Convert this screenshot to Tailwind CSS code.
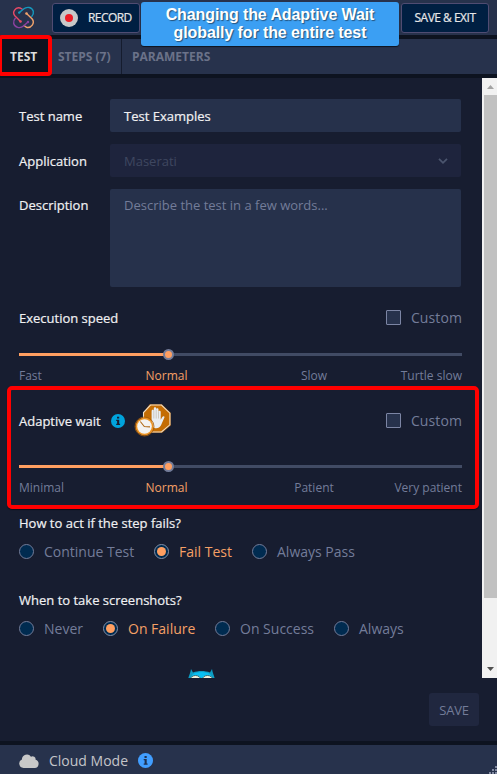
<!DOCTYPE html>
<html lang="en">
<head>
<meta charset="utf-8">
<title>Test settings</title>
<script src="https://cdn.jsdelivr.net/npm/@tailwindcss/browser@4"></script>
</head>
<body class="relative flex h-[774px] w-[497px] flex-col overflow-hidden bg-[#171d30] font-['Open_Sans',sans-serif] text-[13px] whitespace-nowrap">
  <header class="flex h-[39px] shrink-0 items-start border-b-4 border-[#0d1320] bg-[#27324c]">
    <svg class="mt-[6px] ml-3 size-[23px] shrink-0" viewBox="0 0 23 23" fill="none" stroke-width="1.4" stroke-linecap="round">
      <path d="M8.500 15.500 2.800 9.800C-.2 6 3.500 .8 8 2L10.800 3.500" stroke="#e84a67"/>
      <path d="M7.200 6.600 11.500 3C15 .2 20 1 21.300 5.200 21.800 7.500 21 9 19.800 10.400" stroke="#1599be"/>
      <path d="M14.500 7.500 20 12.800C23.500 17 19 22.500 14.500 21.300L12 19.500" stroke="#f0a26b"/>
      <path d="M16 16 11.500 20C8 23 2.800 21.500 1.700 17.500 1.300 15.200 2 13.700 3.300 12.300" stroke="#8b42a0"/>
      <g stroke="none"><circle cx="8.500" cy="15.500" r="1.300" fill="#e84a67"/><circle cx="7.200" cy="6.600" r="1.200" fill="#1599be"/><circle cx="14.500" cy="7.500" r="1.300" fill="#f0a26b"/><circle cx="16" cy="16" r="1.200" fill="#8b42a0"/></g>
    </svg>
    <button class="mt-[3px] ml-[17px] flex h-[30px] w-[88px] shrink-0 items-center rounded-[3px] border border-[#504c72] bg-[#001f42] pl-[7px] text-[12px] font-medium text-[#e6e6e8]">
      <span class="mr-[10px] flex size-[18px] shrink-0 items-center justify-center rounded-full bg-[#c8c8c8]"><span class="size-2 rounded-full bg-[#ee1c25]"></span></span><span class="tracking-[-0.55px] [-webkit-text-stroke:0.2px]">RECORD</span>
    </button>
    <button class="mt-[3px] ml-auto mr-[8px] h-[30px] w-[88px] rounded-[3px] border border-[#504c72] bg-[#001f42] text-[12px] font-medium tracking-[-0.5px] text-[#e6e6e8] [-webkit-text-stroke:0.2px]">SAVE &amp; EXIT</button>
  </header>
  <nav class="flex h-[39px] shrink-0 items-stretch border-b-4 border-[#0d1320] bg-[#27324c] text-[12px] leading-[35px] font-bold text-[#6b7289]">
    <div class="w-[48px] bg-[#0d1320] pl-[10px] text-[#dddddd]">TEST</div>
    <div class="w-[74px] border-r border-[#151c2e] pl-[10px]">STEPS (7)</div>
    <div class="pl-[10px]">PARAMETERS</div>
  </nav>
  <div class="flex h-[600px] shrink-0">
    <main class="h-[600px] w-[482px] overflow-hidden pt-[21px] pr-5 pl-[19px] font-medium text-[#f0f0f2]">
      <div class="flex h-[33px] items-center"><div class="w-[91px] pt-[2px] [-webkit-text-stroke:0.2px]">Test name</div><div class="flex h-full w-[351px] items-center rounded-[2px] bg-[#26314b] pt-[2px] pl-[14px] [-webkit-text-stroke:0.2px]"><span>Test Examples</span></div></div>
      <div class="mt-3 flex h-[33px] items-center"><div class="w-[91px] pt-[2px] [-webkit-text-stroke:0.2px]">Application</div><div class="flex h-full w-[351px] items-center justify-between rounded-[2px] bg-[#1e243d] pr-[13px] pl-[14px] font-normal text-[#3e4760]"><span class="pt-[2px]">Maserati</span><svg class="size-[10px]" viewBox="0 0 10 10" fill="none" stroke="#4b556e" stroke-width="1.8"><path d="m1 2.8 4 4 4-4"/></svg></div></div>
      <div class="mt-3 flex h-[98px]"><div class="w-[91px] pt-[6px] leading-5 [-webkit-text-stroke:0.2px]">Description</div><div class="h-full w-[351px] rounded-[2px] bg-[#26314b] pt-[6px] pl-[14px] leading-5 font-normal text-[#737c99]">Describe the test in a few words...</div></div>

      <div class="mt-[15px] flex h-[30px] items-center"><span class="pt-1 [-webkit-text-stroke:0.2px]">Execution speed</span><span class="ml-auto mr-[10px] size-[15px] rounded-[1px] border border-[#7c85a4] bg-[#27324c]"></span><span class="text-[14px] font-normal tracking-[0.1px] text-[#737c99]">Custom</span></div>
      <div class="relative mt-[21px] h-[3px] bg-[#414b64]"><div class="h-full w-[149px] bg-[#ff9f61]"></div><span class="absolute top-[-4px] left-[144px] size-[11px] rounded-full border-2 border-[#737c99] bg-[#ff9f61]"></span></div>
      <div class="mt-[10px] grid h-5 grid-cols-[74px_147px_148px_74px] text-center text-[12px] leading-5 font-normal text-[#737c99]"><span class="text-left">Fast</span><span class="text-[#f5a066]">Normal</span><span>Slow</span><span class="flex justify-end">Turtle slow</span></div>

      <div class="mt-[16px] flex h-9 items-center"><span class="pt-1 [-webkit-text-stroke:0.2px]">Adaptive wait</span>
        <svg class="relative top-px ml-[10px] size-[14px] shrink-0" viewBox="0 0 14 14"><circle cx="7" cy="7" r="7" fill="#00a3dc"/><path d="M6 2.8h2.2v1.8H6zM5.2 5.7h3v4h.9v1.2H5.2V9.7h.9V6.9h-.9z" fill="#171d30"/></svg>
        <svg class="ml-[9px] h-[36px] w-[39px] shrink-0" viewBox="0 0 39 36">
          <path d="M15.700 2h12l9.300 9v12.500L28 31H16l-7-7.500V11Z" fill="#7c4a15"/><path d="M16.500 3h11l8.400 8.200v11.600L27.500 30H17l-7.500-7V10.500Z" fill="#c46d04" stroke="#f4e0c4" stroke-width="1.1"/>
          <path d="M17.600 19v-10c0-1.700 2.200-1.700 2.200 0v-2.500c0-1.600 2.400-1.600 2.400 0v1c0-1.600 2.300-1.600 2.300 0v2.300c0-1.500 2.200-1.500 2.200 0v8l1.600-2.800c1-1.500 2.800-.6 2 .8l-3.300 7.500c-1 2-2.700 3-4.700 3-3.400 0-4.700-2.300-4.700-5Z" fill="#e9edf2"/><path d="M19.800 8.500v8m2.400-9v9m2.300-7v7" stroke="#b2a28e" stroke-width=".5"/>
          <circle cx="10.500" cy="24.500" r="9" fill="#eb9222"/><circle cx="10.500" cy="24.500" r="9.500" fill="none" stroke="#a85d09" stroke-width=".8"/><circle cx="10.500" cy="24.500" r="7.300" fill="#f3f3f1"/><path d="m6.300 19.500 4 5 5.700.4" fill="none" stroke="#b06b19" stroke-width="1.100"/>
        </svg>
        <span class="ml-auto mr-[10px] size-[15px] rounded-[1px] border border-[#7c85a4] bg-[#27324c]"></span><span class="text-[14px] font-normal tracking-[0.1px] text-[#737c99]">Custom</span></div>
      <div class="relative mt-[27px] h-[3px] bg-[#414b64]"><div class="h-full w-[149px] bg-[#ff9f61]"></div><span class="absolute top-[-4px] left-[144px] size-[11px] rounded-full border-2 border-[#737c99] bg-[#ff9f61]"></span></div>
      <div class="mt-[10px] grid h-5 grid-cols-[74px_147px_148px_74px] text-center text-[12px] leading-5 font-normal text-[#737c99]"><span class="text-left">Minimal</span><span class="text-[#f5a066]">Normal</span><span>Patient</span><span class="flex justify-end">Very patient</span></div>

      <div class="mt-[15px] h-5 leading-5 [-webkit-text-stroke:0.2px]">How to act if the step fails?</div>
      <div class="mt-[11px] flex h-[15px] items-center text-[14px] font-normal text-[#737c99]">
        <div class="flex w-[135px] items-center gap-[10px]"><span class="size-[15px] rounded-full border border-[#737c99] bg-[#002b50]"></span>Continue Test</div>
        <div class="flex w-[98px] items-center gap-[10px] text-[#f5a066]"><span class="flex size-[15px] items-center justify-center rounded-full border border-[#8490a8] bg-[#002b50]"><span class="size-[9px] rounded-full bg-[#ff9f61]"></span></span>Fail Test</div>
        <div class="flex items-center gap-[10px]"><span class="size-[15px] rounded-full border border-[#737c99] bg-[#002b50]"></span>Always Pass</div>
      </div>
      <div class="mt-[31px] h-5 leading-5 [-webkit-text-stroke:0.2px]">When to take screenshots?</div>
      <div class="mt-[11px] flex h-[15px] items-center text-[14px] font-normal text-[#737c99]">
        <div class="flex w-[84px] items-center gap-[10px]"><span class="size-[15px] rounded-full border border-[#737c99] bg-[#002b50]"></span>Never</div>
        <div class="flex w-[112px] items-center gap-[10px] text-[#f5a066]"><span class="flex size-[15px] items-center justify-center rounded-full border border-[#8490a8] bg-[#002b50]"><span class="size-[9px] rounded-full bg-[#ff9f61]"></span></span>On Failure</div>
        <div class="flex w-[119px] items-center gap-[10px]"><span class="size-[15px] rounded-full border border-[#737c99] bg-[#002b50]"></span>On Success</div>
        <div class="flex items-center gap-[10px]"><span class="size-[15px] rounded-full border border-[#737c99] bg-[#002b50]"></span>Always</div>
      </div>
      <svg class="mt-8 ml-[169px] h-[20px] w-[27px]" viewBox="0 0 27 20"><path d="M0 12C.5 8 2 7 3 1l2 3.500C10 2.500 17 2.500 22 4.500L24 1c.8 5 2.500 7 3 11v8H0Z" fill="#0d9ec4"/><path d="M4 7C7 3 20 3 23 7v5H4Z" fill="#08bff2"/><ellipse cx="7.500" cy="11.300" rx="5" ry="3.800" fill="#f4f2dc" stroke="#386e76"/><ellipse cx="19.500" cy="11.300" rx="5" ry="3.800" fill="#f4f2dc" stroke="#386e76"/></svg>
    </main>
    <aside class="flex w-[15px] flex-col bg-[#f1f1f1]">
      <svg class="h-[17px] w-[15px] shrink-0" viewBox="0 0 15 17"><path d="m5 11 3.500-4 3.500 4Z" fill="#a3a3a3"/></svg>
      <div class="ml-[2px] h-[503px] w-[13px] bg-[#c1c1c1]"></div>
      <svg class="mt-auto h-[17px] w-[15px] shrink-0" viewBox="0 0 15 17"><path d="m5 6 3.500 4L12 6Z" fill="#505050"/></svg>
    </aside>
  </div>
  <footer class="flex h-[63px] shrink-0 items-center justify-end pr-[18px]"><button class="h-[33px] w-[50px] rounded-[3px] bg-[#20273f] pt-[2px] text-[13px] tracking-[-0.2px] text-[#737c99]">SAVE</button></footer>
  <div class="flex h-[33px] shrink-0 items-center border-t-4 border-[#0d1320] bg-[#27324c] pl-[19px] text-[14px] text-[#c4c5c9]">
    <svg class="mt-[2px] h-[14px] w-5" viewBox="0 0 20 14" fill="#c8c8c8"><path d="M4.500 14a4.500 4.500 0 0 1-1.600-8.600A5 5 0 0 1 12 2.700a3.100 3.100 0 0 1 4.600 3.100A4.200 4.200 0 0 1 15.800 14Z"/></svg>
    <span class="mt-[2px] ml-[10px]">Cloud Mode</span>
    <svg class="mt-[2px] ml-[10.4px] size-[15px]" viewBox="0 0 15 15"><circle cx="7.500" cy="7.500" r="7.500" fill="#419eff"/><path d="M6.500 3h2.200v1.900H6.500zM5.700 6h3v4.500h.9v1.200H5.700v-1.200h.9V7.200h-.9z" fill="#1e3151"/></svg>
    <svg class="ml-auto self-end" width="9" height="9" viewBox="0 0 9 9" fill="#8088a0"><path d="M7 1h2v2H7zM4 4h2v2H4zM7 4h2v2H7zM1 7h2v2H1zM4 7h2v2H4zM7 7h2v2H7z"/></svg>
  </div>

  <!-- Tutorial annotations -->
  <div class="absolute top-[2px] left-[141px] flex h-[44px] w-[258px] flex-col items-center rounded-[3px] bg-[#3b9ff3] pt-[4px] font-['Liberation_Sans',sans-serif] text-[16px] leading-[18px] font-bold tracking-[-0.1px] text-white shadow-[0_1px_1px_#0d1320] [text-shadow:1px_1px_1px_#25547e]"><span>Changing the Adaptive Wait</span><span>globally for the entire test</span></div>
  <div class="absolute top-[35px] left-[-2px] h-[41px] w-[54px] rounded-[4px] border-4 border-[#ff0000]"></div>
  <div class="absolute top-[386px] left-[7px] h-[123px] w-[472px] rounded-[5px] border-4 border-[#ff0000] shadow-[0_1px_1px_#0b0e18]"></div>
</body>
</html>
